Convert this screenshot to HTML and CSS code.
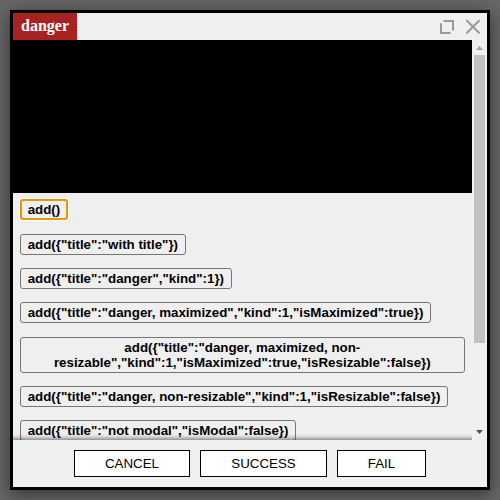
FILE: index.html
```
<!DOCTYPE html>
<html lang="en">
<head>
<meta charset="utf-8">
<title>danger</title>
<link rel="stylesheet" href="styles.css">
</head>
<body>
<div class="window">
  <header class="header">
    <div class="title">danger</div>
    <div class="controls">
      <svg class="icon" width="14" height="15" viewBox="0 0 14 15"><path d="M4.300 2H13V10.800M1 5V14H9.700"/></svg>
      <svg class="icon" width="14" height="15" viewBox="0 0 14 15"><path d="M1 1.700L13 13.700M13 1.700L1 13.700"/></svg>
    </div>
  </header>
  <main class="body">
    <div class="content">
      <div class="canvas"></div>
      <div class="list">
        <button class="add focused">add()</button>
        <button class="add">add({"title":"with title"})</button>
        <button class="add">add({"title":"danger","kind":1})</button>
        <button class="add">add({"title":"danger, maximized","kind":1,"isMaximized":true})</button>
        <button class="add">add({"title":"danger, maximized, non-resizable","kind":1,"isMaximized":true,"isResizable":false})</button>
        <button class="add">add({"title":"danger, non-resizable","kind":1,"isResizable":false})</button>
        <button class="add">add({"title":"not modal","isModal":false})</button>
      </div>
      <div class="fade"></div>
    </div>
    <div class="scrollbar">
      <svg class="arrow" width="15" height="15" viewBox="0 0 15 15"><path fill="#a3a3a3" d="M4 10L7.500 6L11 10Z"/></svg>
      <div class="track"><div class="thumb"></div></div>
      <svg class="arrow" width="15" height="15" viewBox="0 0 15 15"><path fill="#505050" d="M4 5L7.500 9L11 5Z"/></svg>
    </div>
  </main>
  <footer class="footer">
    <button class="action cancel">CANCEL</button>
    <button class="action success">SUCCESS</button>
    <button class="action fail">FAIL</button>
  </footer>
</div>
</body>
</html>
```
FILE: styles.css
```
* { box-sizing: border-box; }
html, body { margin: 0; height: 100%; overflow: hidden; }
body { background: #666; padding: 10px; }
.window {
  width: 480px; height: 480px;
  border: 3px solid #000;
  background: #efefef;
  display: flex; flex-direction: column;
  box-shadow: 0 4px 16px rgba(0, 0, 0, .5);
}
.header { height: 27px; flex: none; display: flex; justify-content: space-between; }
.title {
  background: #a82222; color: #fff;
  font: bold 16px/26px "Liberation Serif", serif;
  padding: 0 8px;
}
.controls { display: flex; gap: 12px; align-items: flex-start; padding: 6px 7px 0 0; }
.icon { fill: none; stroke: #999; stroke-width: 2; stroke-linecap: round; }
.body { flex: 1; min-height: 0; display: flex; }
.content { width: 459px; overflow: hidden; position: relative; }
.canvas { height: 153px; background: #000; }
.list { padding: 6.400px 7px 0 6.670px; display: flex; flex-direction: column; align-items: flex-start; gap: 13.300px; }
.add {
  margin: 0; padding: 2px 7px;
  font: bold 13.333px/15px "Liberation Sans", Arial, sans-serif;
  color: #000; background: #efefef;
  border: 1px solid #767676; border-radius: 3px;
  text-align: center; flex: none; max-width: 100%;
}
.focused { border: 2px solid #e59700; padding: 1px 6px; box-shadow: 0 0 0 1px #fff; }
.fade {
  position: absolute; left: 0; right: 0; bottom: 0; height: 6px;
  background: linear-gradient(rgba(0, 0, 0, 0), rgba(0, 0, 0, .1) 45%, rgba(0, 0, 0, .38));
}
.scrollbar { width: 15px; display: flex; flex-direction: column; background: #f0f0f0; }
.arrow { flex: none; display: block; }
.track { flex: 1; }
.thumb { width: 11px; height: 288px; margin: 0 2px; background: #c1c1c1; }
.footer { height: 47px; flex: none; display: flex; justify-content: center; padding-top: 10px; gap: 10px; }
.action {
  height: 27px; padding: 0; margin: 0;
  background: #fff; border: 1px solid #000; color: #000;
  font: 13.333px "Liberation Sans", Arial, sans-serif;
}
.cancel { width: 116px; }
.success { width: 127px; }
.fail { width: 89px; }
```
